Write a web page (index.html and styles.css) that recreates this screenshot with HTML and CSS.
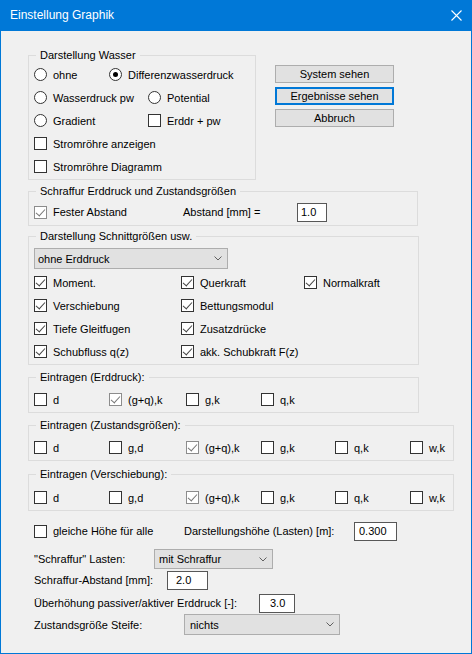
FILE: index.html
```html
<!DOCTYPE html>
<html lang="de">
<head>
<meta charset="UTF-8">
<title>Einstellung Graphik</title>
<link rel="stylesheet" href="styles.css">
</head>
<body>

<div class="window">
  <div class="titlebar">
    <span class="title">Einstellung Graphik</span>
    <svg class="close" width="11" height="11" viewBox="0 0 11 11">
      <path d="M0.5 0.5 L10.5 10.5 M10.5 0.5 L0.5 10.5" stroke="#fff" stroke-width="1.1" fill="none"/>
    </svg>
  </div>

  <div class="client">
    <div class="top">
      <fieldset class="group wasser">
        <legend>Darstellung Wasser</legend>
        <div class="row">
          <label class="opt col-75"><span class="radio"></span>ohne</label>
          <label class="opt"><span class="radio on"></span>Differenzwasserdruck</label>
        </div>
        <div class="row">
          <label class="opt col-114"><span class="radio"></span>Wasserdruck pw</label>
          <label class="opt"><span class="radio"></span>Potential</label>
        </div>
        <div class="row">
          <label class="opt col-114"><span class="radio"></span>Gradient</label>
          <label class="opt"><span class="box"></span>Erddr + pw</label>
        </div>
        <div class="row">
          <label class="opt"><span class="box"></span>Stromröhre anzeigen</label>
        </div>
        <div class="row">
          <label class="opt"><span class="box"></span>Stromröhre Diagramm</label>
        </div>
      </fieldset>

      <div class="buttons">
        <button class="btn">System sehen</button>
        <button class="btn default">Ergebnisse sehen</button>
        <button class="btn">Abbruch</button>
      </div>
    </div>

    <fieldset class="group schraffur">
      <legend>Schraffur Erddruck und Zustandsgrößen</legend>
      <div class="row field-row">
        <label class="opt col-149"><span class="box on dim"></span>Fester Abstand</label>
        <span class="caption col-114">Abstand [mm] =</span>
        <span class="edit abstand">1.0</span>
      </div>
    </fieldset>

    <fieldset class="group schnitt">
      <legend>Darstellung Schnittgrößen usw.</legend>
      <div class="combo erddruck">
        <span>ohne Erddruck</span>
        <svg class="chevron" width="8" height="5" viewBox="0 0 8 5"><path d="M0.5 0.5 L4 4 L7.5 0.5" stroke="#606060" fill="none"/></svg>
      </div>
      <div class="grid-3">
        <label class="opt"><span class="box on"></span>Moment.</label>
        <label class="opt"><span class="box on"></span>Querkraft</label>
        <label class="opt"><span class="box on"></span>Normalkraft</label>
        <label class="opt"><span class="box on"></span>Verschiebung</label>
        <label class="opt"><span class="box on"></span>Bettungsmodul</label>
        <span></span>
        <label class="opt"><span class="box on"></span>Tiefe Gleitfugen</label>
        <label class="opt"><span class="box on"></span>Zusatzdrücke</label>
        <span></span>
        <label class="opt"><span class="box on"></span>Schubfluss q(z)</label>
        <label class="opt"><span class="box on"></span>akk. Schubkraft F(z)</label>
        <span></span>
      </div>
    </fieldset>

    <fieldset class="group eintragen narrow">
      <legend>Eintragen (Erddruck):</legend>
      <div class="grid-6">
        <label class="opt"><span class="box"></span>d</label>
        <label class="opt"><span class="box on dim"></span>(g+q),k</label>
        <label class="opt"><span class="box"></span>g,k</label>
        <label class="opt"><span class="box"></span>q,k</label>
      </div>
    </fieldset>

    <fieldset class="group eintragen wide">
      <legend>Eintragen (Zustandsgrößen):</legend>
      <div class="grid-6">
        <label class="opt"><span class="box"></span>d</label>
        <label class="opt"><span class="box"></span>g,d</label>
        <label class="opt"><span class="box on dim"></span>(g+q),k</label>
        <label class="opt"><span class="box"></span>g,k</label>
        <label class="opt"><span class="box"></span>q,k</label>
        <label class="opt"><span class="box"></span>w,k</label>
      </div>
    </fieldset>

    <fieldset class="group eintragen wide last">
      <legend>Eintragen (Verschiebung):</legend>
      <div class="grid-6">
        <label class="opt"><span class="box"></span>d</label>
        <label class="opt"><span class="box"></span>g,d</label>
        <label class="opt"><span class="box on dim"></span>(g+q),k</label>
        <label class="opt"><span class="box"></span>g,k</label>
        <label class="opt"><span class="box"></span>q,k</label>
        <label class="opt"><span class="box"></span>w,k</label>
      </div>
    </fieldset>

    <div class="lasten">
      <div class="line line-hoehe">
        <label class="opt col-150"><span class="box"></span>gleiche Höhe für alle</label>
        <span class="caption col-170">Darstellungshöhe (Lasten) [m]:</span>
        <span class="edit hoehe">0.300</span>
      </div>
      <div class="line line-schraffur">
        <span class="caption col-120">"Schraffur" Lasten:</span>
        <div class="combo mit">
          <span>mit Schraffur</span>
          <svg class="chevron" width="8" height="5" viewBox="0 0 8 5"><path d="M0.5 0.5 L4 4 L7.5 0.5" stroke="#606060" fill="none"/></svg>
        </div>
      </div>
      <div class="line line-abstand">
        <span class="caption col-133">Schraffur-Abstand [mm]:</span>
        <span class="edit s-abstand">2.0</span>
      </div>
      <div class="line line-ueber">
        <span class="caption col-225">Überhöhung passiver/aktiver Erddruck [-]:</span>
        <span class="edit ueber">3.0</span>
      </div>
      <div class="line line-steife">
        <span class="caption col-150">Zustandsgröße Steife:</span>
        <div class="combo steife">
          <span>nichts</span>
          <svg class="chevron" width="8" height="5" viewBox="0 0 8 5"><path d="M0.5 0.5 L4 4 L7.5 0.5" stroke="#606060" fill="none"/></svg>
        </div>
      </div>
    </div>
  </div>
</div>

</body>
</html>
```

FILE: styles.css
```css
* {
  box-sizing: border-box;
}
body {
  margin: 0;
  font-family: "Liberation Sans", Arial, sans-serif;
  font-size: 11px;
  color: #000;
  background-color: #f0f0f0;
}
.window {
  width: 472px;
  height: 654px;
  border: 1px solid #0078d7;
  border-top: 0;
  background-color: #f0f0f0;
}
.titlebar {
  height: 31px;
  display: flex;
  align-items: center;
  justify-content: space-between;
  padding: 0 9px 1px 9px;
  background-color: #0078d7;
  color: #fff;
  font-size: 12px;
}
.close {
  display: block;
}
.client {
  padding: 18px 0 0 27px;
}

/* group boxes */
.group {
  margin: 0;
  padding: 0 0 0 5px;
  border: 1px solid #dcdcdc;
  min-width: 0;
}
.group legend {
  margin-left: 2px;
  padding: 0 4px;
  line-height: 13px;
}
.row {
  display: flex;
  align-items: center;
  height: 23px;
}
.opt {
  display: flex;
  align-items: center;
  gap: 6px;
  white-space: nowrap;
}
.caption {
  white-space: nowrap;
}
.col-75 { width: 75px; }
.col-114 { width: 114px; }
.col-120 { width: 120px; }
.col-133 { width: 133px; }
.col-149 { width: 149px; }
.col-150 { width: 150px; }
.col-170 { width: 170px; }
.col-225 { width: 225px; }

/* check boxes and radio buttons */
.box,
.radio {
  position: relative;
  flex: none;
  width: 13px;
  height: 13px;
  border: 1px solid #333;
  background-color: #fff;
}
.radio {
  border-radius: 50%;
  display: flex;
  align-items: center;
  justify-content: center;
}
.radio.on::after {
  content: "";
  width: 5px;
  height: 5px;
  border-radius: 50%;
  background-color: #000;
}
.box.on::after {
  content: "";
  position: absolute;
  left: 3px;
  top: 0px;
  width: 4px;
  height: 8px;
  border: solid #444;
  border-width: 0 1px 1px 0;
  transform: rotate(42deg);
}
.box.dim {
  border-color: #8c8c8c;
}
.box.dim::after {
  border-color: #777;
}

/* top part: water group and buttons */
.top {
  display: flex;
  align-items: flex-start;
}
.wasser {
  width: 228px;
  padding-top: 1px;
  padding-bottom: 1px;
}
.buttons {
  display: flex;
  flex-direction: column;
  gap: 4px;
  margin: 16px 0 0 19px;
}
.btn {
  width: 119px;
  height: 18px;
  padding: 0;
  font-family: inherit;
  font-size: 11px;
  color: #000;
  background-color: #e1e1e1;
  border: 1px solid #adadad;
}
.btn.default {
  border: 2px solid #0078d7;
}

.schraffur {
  width: 390px;
  margin-top: 5px;
  padding-top: 4px;
  padding-bottom: 3px;
}
.field-row {
  height: 20px;
}
.edit {
  display: flex;
  align-items: center;
  height: 19px;
  padding-left: 3px;
  background-color: #fff;
  border: 1px solid #575757;
}
.abstand { width: 30px; }
.hoehe { width: 43px; padding-left: 4px; }
.s-abstand { width: 41px; padding-left: 8px; }
.ueber { width: 36px; padding-left: 10px; }

/* drop-down boxes */
.combo {
  display: flex;
  align-items: center;
  justify-content: space-between;
  height: 21px;
  padding: 0 5px 0 3px;
  background-color: #e1e1e1;
  border: 1px solid #adadad;
}
.chevron {
  display: block;
}
.erddruck { width: 194px; }
.mit { width: 119px; height: 20px; padding-left: 4px; }
.steife { width: 156px; padding-left: 5px; }

.schnitt {
  width: 391px;
  margin-top: 4px;
  padding-top: 5px;
  padding-bottom: 1px;
}
.grid-3 {
  display: grid;
  grid-template-columns: 147px 123px auto;
  grid-auto-rows: 23px;
  align-items: center;
  margin-top: 2px;
}

.eintragen {
  margin-top: 6px;
  padding-top: 4px;
  padding-bottom: 1px;
}
.eintragen.last {
  margin-top: 7px;
  padding-top: 5px;
}
.narrow { width: 391px; }
.wide { width: 426px; }
.grid-6 {
  display: grid;
  grid-template-columns: 75px 77px 75px 74px 75px auto;
  grid-auto-rows: 23px;
  align-items: center;
}

/* loads and further settings */
.lasten {
  margin: 10px 0 0 6px;
}
.line {
  display: flex;
  align-items: center;
}
.line-hoehe { height: 20px; }
.line-schraffur { height: 20px; margin-top: 8px; }
.line-abstand { height: 20px; margin-top: 1px; }
.line-ueber { height: 20px; margin-top: 3px; }
.line-steife { height: 21px; margin-top: 1px; }
```
